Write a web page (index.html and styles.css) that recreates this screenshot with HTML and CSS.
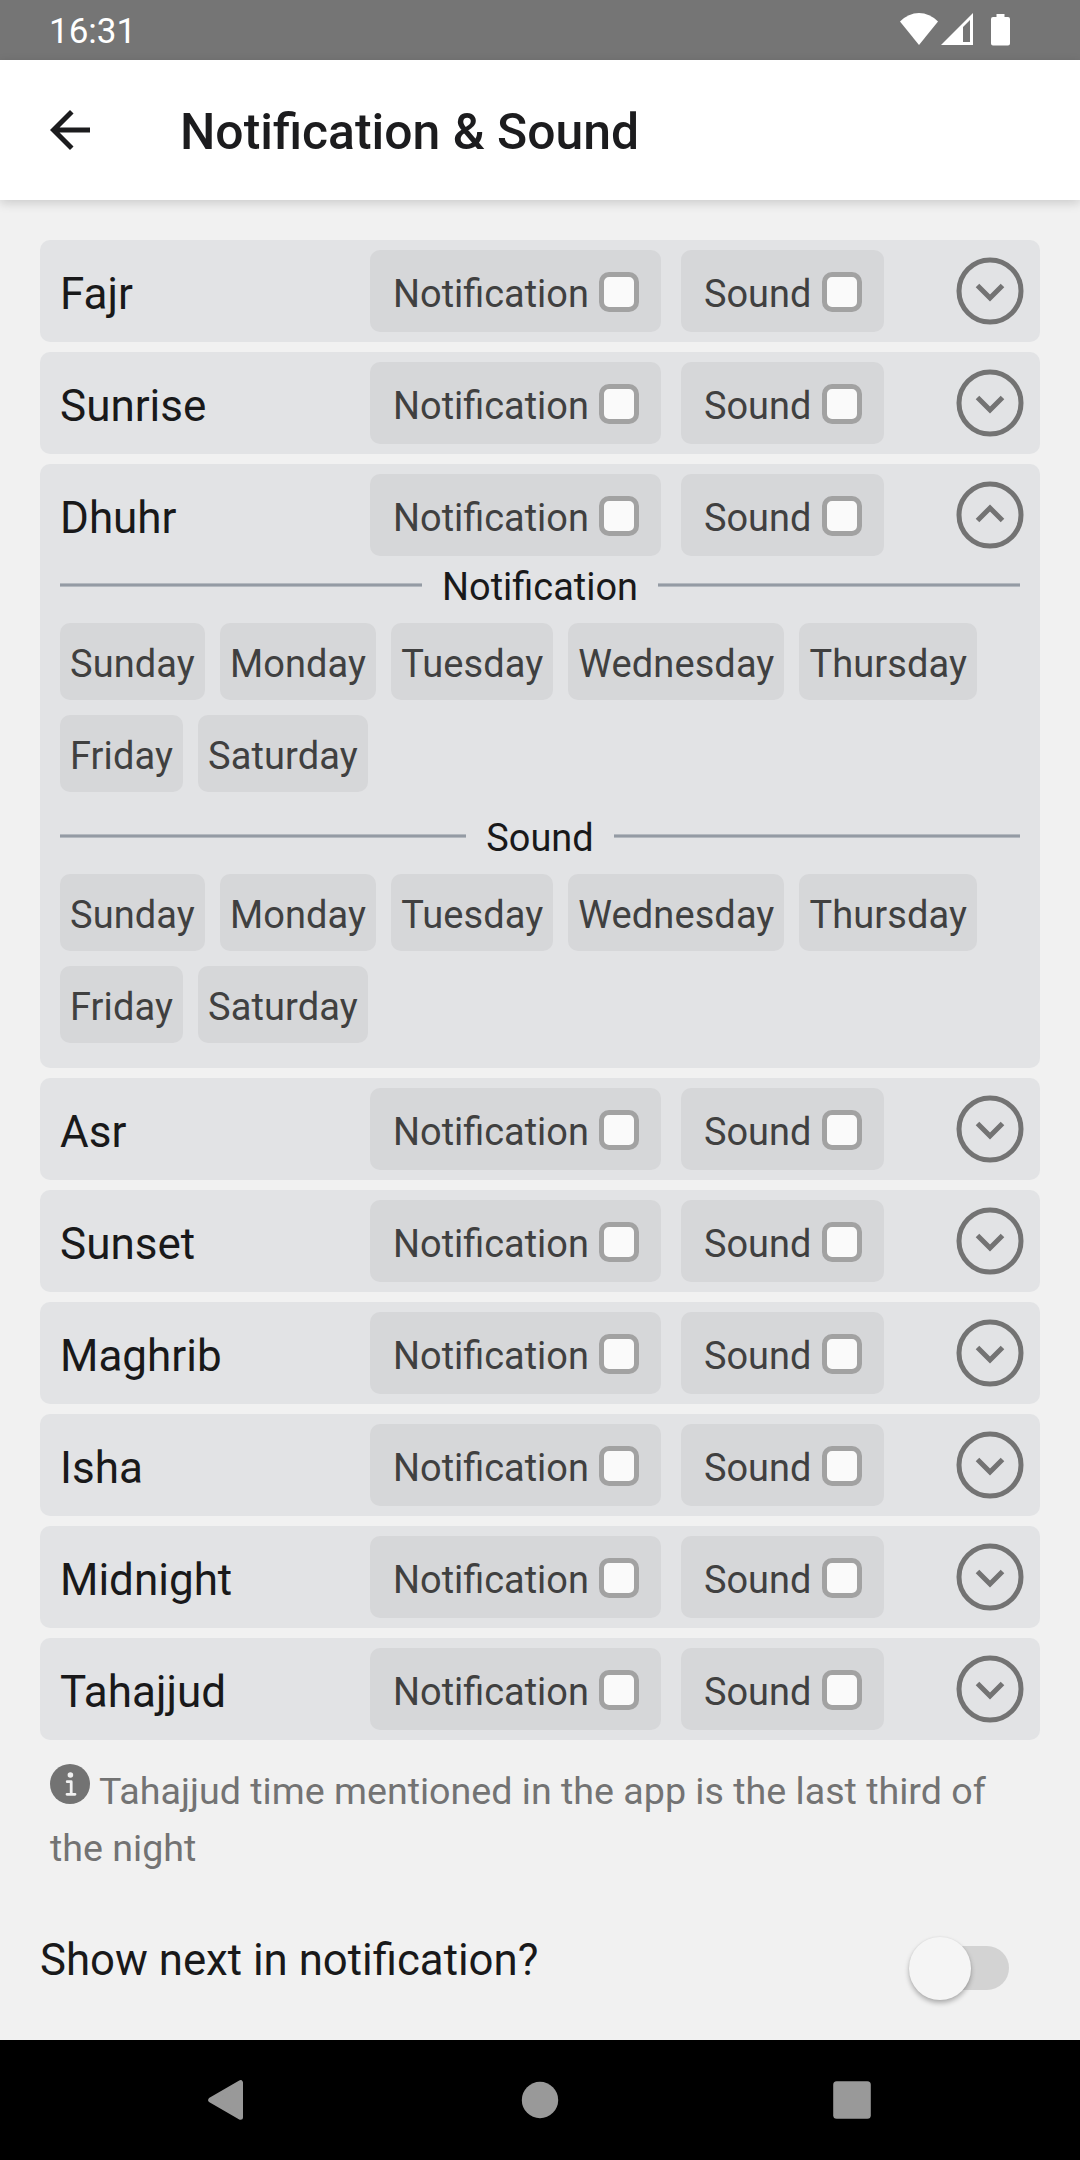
FILE: index.html
```html
<!DOCTYPE html>
<html lang="en">
<head>
<meta charset="utf-8">
<title>Notification &amp; Sound</title>
<link rel="stylesheet" href="styles.css">
</head>
<body>
<svg width="0" height="0" class="defs" aria-hidden="true">
  <symbol id="down" viewBox="0 0 68 68"><circle cx="34" cy="34" r="31"/><path d="M21.5 28.5 34 41l12.500-12.500"/></symbol>
  <symbol id="up" viewBox="0 0 68 68"><circle cx="34" cy="34" r="31"/><path d="M21.500 39.500 34 27l12.500 12.500"/></symbol>
</svg>
<div class="screen">
  <div class="status">
    <span class="time">16:31</span>
    <svg class="status-icons" width="112" height="60" viewBox="899 0 112 60">
      <path d="M919 45 900 21.500Q908.500 13 919 13T938 21.500Z"/>
      <path fill-rule="evenodd" d="M941 45 973 13V45ZM963 27V42H970V20Z"/>
      <path d="M996.500 14h8v3h3.500a2 2 0 0 1 2 2v24.500a2 2 0 0 1-2 2h-15a2 2 0 0 1-2-2V19a2 2 0 0 1 2-2h3.500z"/>
    </svg>
  </div>
  <header class="bar">
    <svg class="back" width="60" height="60" viewBox="0 0 24 24"><path d="M20 11H7.830l5.590-5.590L12 4l-8 8 8 8 1.410-1.410L7.830 13H20v-2z"/></svg>
    <h1>Notification &amp; Sound</h1>
  </header>
  <main>
    <section class="card"><div class="row"><span class="name">Fajr</span><label class="opt"><span>Notification</span><i class="box"></i></label><label class="opt"><span>Sound</span><i class="box"></i></label><svg class="chev"><use href="#down"/></svg></div></section>
    <section class="card"><div class="row"><span class="name">Sunrise</span><label class="opt"><span>Notification</span><i class="box"></i></label><label class="opt"><span>Sound</span><i class="box"></i></label><svg class="chev"><use href="#down"/></svg></div></section>
    <section class="card open">
      <div class="row"><span class="name">Dhuhr</span><label class="opt"><span>Notification</span><i class="box"></i></label><label class="opt"><span>Sound</span><i class="box"></i></label><svg class="chev"><use href="#up"/></svg></div>
      <div class="divider"><span>Notification</span></div>
      <div class="days"><span>Sunday</span><span>Monday</span><span>Tuesday</span><span>Wednesday</span><span>Thursday</span><span>Friday</span><span>Saturday</span></div>
      <div class="divider"><span>Sound</span></div>
      <div class="days"><span>Sunday</span><span>Monday</span><span>Tuesday</span><span>Wednesday</span><span>Thursday</span><span>Friday</span><span>Saturday</span></div>
    </section>
    <section class="card"><div class="row"><span class="name">Asr</span><label class="opt"><span>Notification</span><i class="box"></i></label><label class="opt"><span>Sound</span><i class="box"></i></label><svg class="chev"><use href="#down"/></svg></div></section>
    <section class="card"><div class="row"><span class="name">Sunset</span><label class="opt"><span>Notification</span><i class="box"></i></label><label class="opt"><span>Sound</span><i class="box"></i></label><svg class="chev"><use href="#down"/></svg></div></section>
    <section class="card"><div class="row"><span class="name">Maghrib</span><label class="opt"><span>Notification</span><i class="box"></i></label><label class="opt"><span>Sound</span><i class="box"></i></label><svg class="chev"><use href="#down"/></svg></div></section>
    <section class="card"><div class="row"><span class="name">Isha</span><label class="opt"><span>Notification</span><i class="box"></i></label><label class="opt"><span>Sound</span><i class="box"></i></label><svg class="chev"><use href="#down"/></svg></div></section>
    <section class="card"><div class="row"><span class="name">Midnight</span><label class="opt"><span>Notification</span><i class="box"></i></label><label class="opt"><span>Sound</span><i class="box"></i></label><svg class="chev"><use href="#down"/></svg></div></section>
    <section class="card"><div class="row"><span class="name">Tahajjud</span><label class="opt"><span>Notification</span><i class="box"></i></label><label class="opt"><span>Sound</span><i class="box"></i></label><svg class="chev"><use href="#down"/></svg></div></section>
    <p class="note"><svg class="info" width="40" height="40" viewBox="0 0 40 40"><circle cx="20" cy="20" r="20" fill="#737373"/><circle cx="20.400" cy="11" r="2.800" fill="#f1f1f1"/><path d="M17.200 17.700h4V30.300M17 30.300h8" fill="none" stroke="#f1f1f1" stroke-width="2.800" stroke-linecap="round" stroke-linejoin="round"/></svg>Tahajjud time mentioned in the app is the last third of the night</p>
    <div class="setting"><span>Show next in notification?</span><div class="switch"><i class="track"></i><i class="thumb"></i></div></div>
  </main>
  <nav>
    <svg width="40" height="44" viewBox="0 0 40 44"><path d="M4.700 22 34.500 4.700V39.300Z" stroke-width="5" stroke-linejoin="round"/></svg>
    <svg width="40" height="44" viewBox="0 0 40 44"><circle cx="21" cy="22" r="18.200"/></svg>
    <svg width="40" height="44" viewBox="0 0 40 44"><rect x="1.200" y="3.200" width="37.600" height="37.600" rx="3.500"/></svg>
  </nav>
</div>
</body>
</html>
```

FILE: styles.css
```css
* { box-sizing: border-box; }
body { margin: 0; background: #f1f1f1; color: #19191a; font-family: Roboto, sans-serif; }
.defs { display: none; }
.screen { width: 1080px; height: 2160px; display: flex; flex-direction: column; overflow: hidden; }
.status { height: 60px; flex: none; padding: 0 69px 0 49px; background: #757575; color: #fff; display: flex; justify-content: space-between; }
.time { font-size: 35px; line-height: 63px; }
.status-icons { fill: #fff; }
.bar { height: 140px; flex: none; padding: 0 40px; background: #fff; display: flex; align-items: center; gap: 80px; box-shadow: 0 3px 10px rgba(0,0,0,.16); }
.back { fill: #1c1c1e; }
h1 { margin: 0; padding-top: 3px; font-size: 49.85px; line-height: 60px; font-weight: 500; color: #1c1c1e; }
main { flex: 1; padding: 40px 40px 0; display: flex; flex-direction: column; gap: 10px; }
.card { border-radius: 10px; background: #e2e3e5; }
.open { height: 604px; }
.row { height: 102px; padding: 10px 16px 10px 20px; display: grid; grid-template-columns: 290px 291px 203px 1fr; column-gap: 20px; align-items: center; }
.name { font-size: 44px; line-height: 54px; padding-top: 6px; }
.opt { height: 82px; padding: 2px 22px 0 23px; border-radius: 10px; background: #d6d7d9; color: #404040; font-size: 37.9px; display: flex; align-items: center; justify-content: space-between; }
.opt span { padding-top: 3px; }
.box { width: 40px; height: 40px; border: 5px solid #a2a2a2; border-radius: 10px; background: #fafafa; }
.chev { width: 68px; height: 68px; justify-self: end; fill: none; stroke: #737373; stroke-width: 5; }
.divider { height: 44px; margin: 0 20px; display: flex; gap: 20px; font-size: 37.9px; line-height: 42px; }
.divider::before, .divider::after { content: ""; flex: 1; height: 4px; margin-top: 17px; background: linear-gradient(#b4b9bf 1px, #949ba4 1px 3px, #b4b9bf 3px); }
.days { margin: 13px 20px 25px; display: flex; flex-wrap: wrap; gap: 15px; }
.days span { height: 77px; padding: 3px 10px 0; border-radius: 10px; background: #d6d7d9; color: #404040; font-size: 38px; letter-spacing: .1px; line-height: 76px; }
.note { margin: 13px 10px 0; color: #737373; font-size: 37.62px; line-height: 57px; }
.info { margin-right: 9px; }
.setting { display: flex; justify-content: space-between; align-items: flex-start; margin-top: 42px; padding-right: 31px; font-size: 43.75px; line-height: 63px; }
.switch { position: relative; width: 101px; height: 63px; margin-top: 8px; }
.track { position: absolute; left: 12px; right: 0; top: 9px; height: 44px; border-radius: 22px; background: #d3d3d3; }
.thumb { position: absolute; left: .5px; top: 0; width: 62.5px; height: 62.5px; border-radius: 50%; background: #f5f5f5; box-shadow: 0 3px 5px rgba(0,0,0,.28), 0 0 2px rgba(0,0,0,.08); }
nav { height: 120px; flex: none; padding: 0 208px 0 206px; background: #000; display: flex; align-items: center; justify-content: space-between; fill: #999; stroke: #999; stroke-width: 0; }
```
